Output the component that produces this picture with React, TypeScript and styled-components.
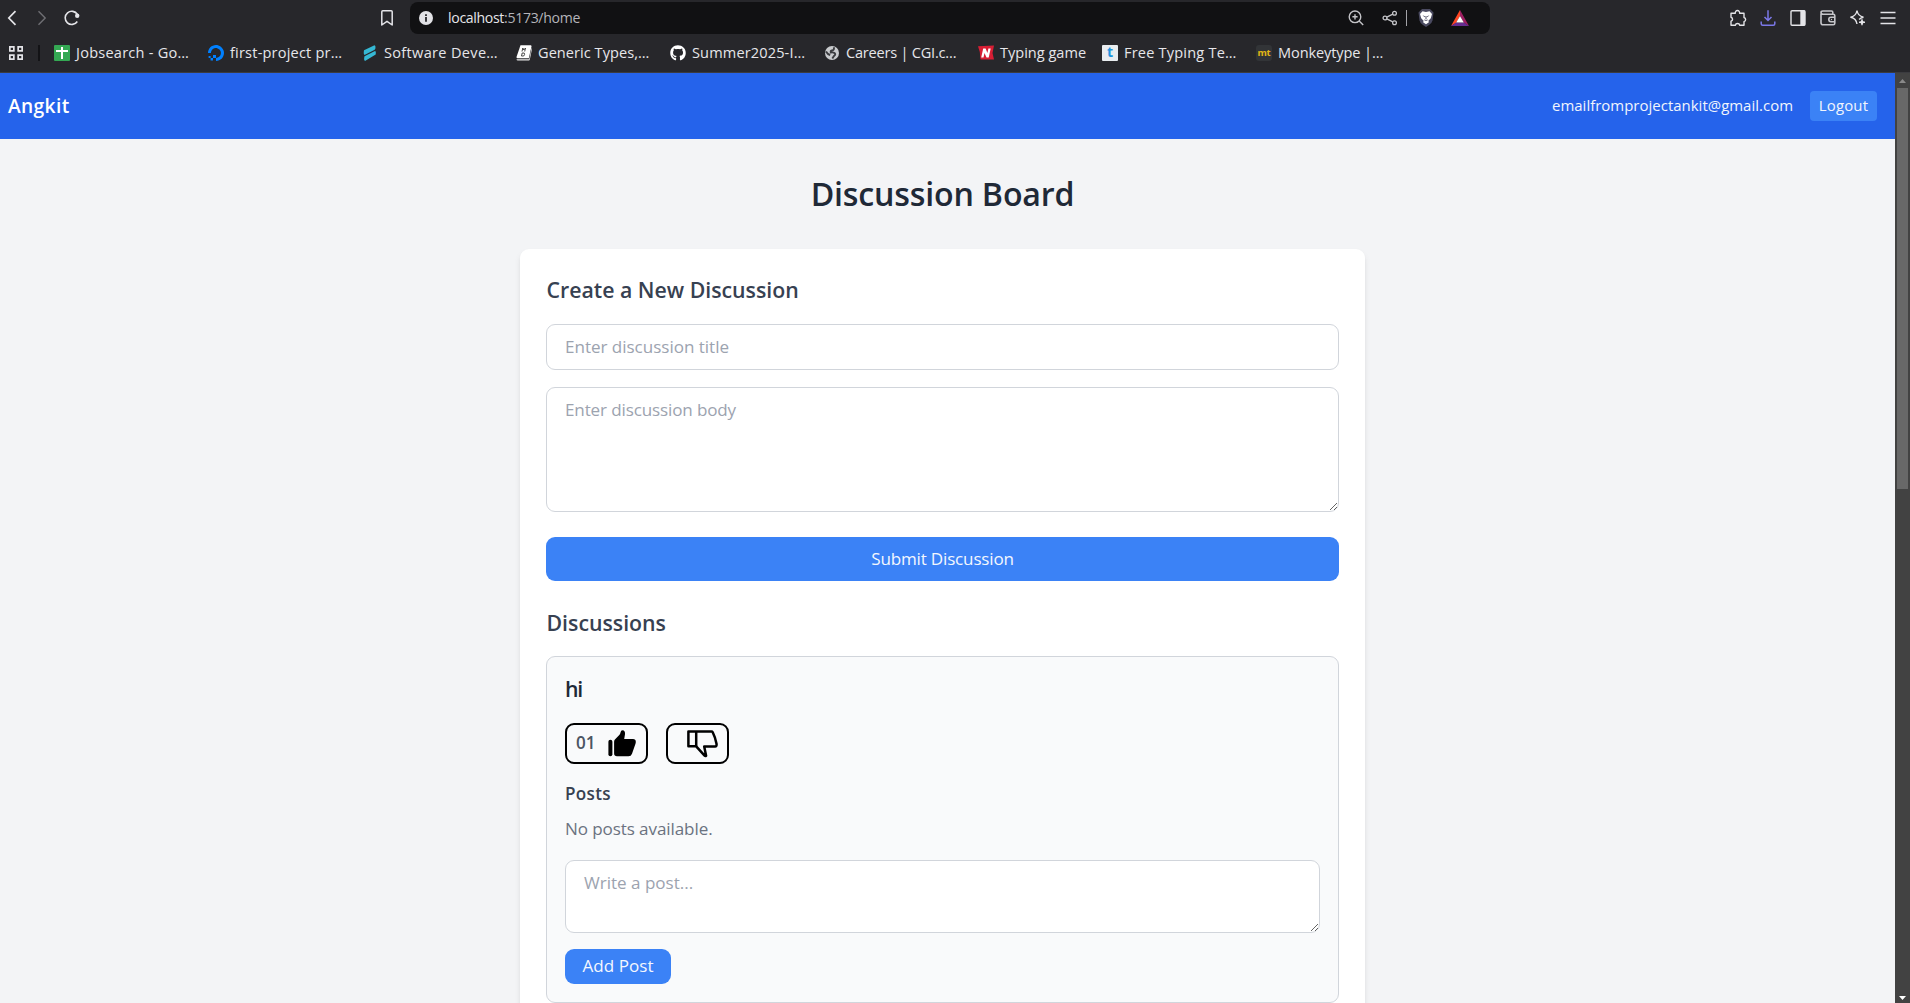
import React from 'react';
import styled, { createGlobalStyle } from 'styled-components';
import { FaGithub } from 'react-icons/fa';

const GlobalStyle = createGlobalStyle`
  *, *::before, *::after { box-sizing: border-box; }
  html, body { margin: 0; padding: 0; overflow: hidden; }
  body, button, input, textarea { font-family: "Open Sans", "Noto Sans", sans-serif; }
  h1, h2, h3, h4, p { margin: 0; }
  svg { display: block; flex: none; }
`;

const Window = styled.div`
  display: flex;
  flex-direction: column;
  width: 100%;
  height: 1003px;
  background: #f3f4f6;
  overflow: hidden;
`;

/* ---------- browser chrome ---------- */

const Toolbar = styled.div`
  display: flex;
  align-items: center;
  flex: none;
  height: 36px;
  background: #27272b;
`;

const IconSlot = styled.div<{ $width?: number; $color?: string }>`
  display: flex;
  align-items: center;
  justify-content: center;
  flex: none;
  width: ${p => p.$width ?? 30}px;
  height: 36px;
  color: ${p => p.$color ?? '#e4e4e8'};
`;

const NavGroup = styled.div`
  display: flex;
  margin-left: -3px;
  width: 375px;
  flex: none;
`;

const AddressBar = styled.div`
  display: flex;
  align-items: center;
  width: 1080px;
  height: 32px;
  margin-left: 8px;
  padding: 0 13px 0 1px;
  border-radius: 8px;
  background: #111113;
`;

const Url = styled.div`
  flex: 1;
  margin-left: 7px;
  font-size: 14.1px;
  line-height: 32px;
  letter-spacing: -0.33px;
  color: #b4b4ba;
  b { font-weight: 400; color: #e6e6ea; }
`;

const UrlDivider = styled.div`
  width: 1px;
  height: 16px;
  background: #a3a3a8;
  margin: 0 2px 0 0;
`;

const ActionGroup = styled.div`
  display: flex;
  margin-left: auto;
  margin-right: 7px;
`;

const BookmarkBar = styled.div`
  display: flex;
  align-items: center;
  flex: none;
  height: 37px;
  padding-bottom: 3px;
  background: #27272b;
  border-bottom: 1px solid #3b3b3f;
`;

const AppsSlot = styled.div`
  display: flex;
  width: 38px;
  padding-left: 8px;
`;

const BarDivider = styled.div`
  width: 2px;
  height: 16px;
  background: #131316;
  margin-right: 14px;
`;

const Bookmark = styled.div<{ $width: number }>`
  display: flex;
  align-items: center;
  gap: 6px;
  flex: none;
  width: ${p => p.$width}px;
`;

const BookmarkLabel = styled.span<{ $track: number }>`
  padding-bottom: 2px;
  font-size: 14.55px;
  line-height: 20px;
  letter-spacing: ${p => p.$track}px;
  white-space: nowrap;
  color: #e6e6ea;
`;

/* ---------- page ---------- */

const Viewport = styled.div`
  display: flex;
  flex: 1;
  min-height: 0;
`;

const Page = styled.div`
  flex: 1;
  min-width: 0;
  height: 930px;
  overflow: hidden;
`;

const ScrollTrack = styled.div`
  display: flex;
  flex-direction: column;
  align-items: center;
  justify-content: space-between;
  width: 15px;
  padding: 6px 0 3px;
  background: #424242;
`;

const ScrollThumb = styled.div`
  width: 11px;
  height: 401px;
  margin: 5px 0 auto;
  background: #686868;
`;

const Header = styled.header`
  display: flex;
  align-items: center;
  justify-content: space-between;
  height: 66px;
  padding: 0 18px 0 8px;
  background: #2563eb;
  color: #fff;
`;

const Brand = styled.div`
  font-size: 19.2px;
  font-weight: 600;
  line-height: 28px;
  letter-spacing: 0.36px;
`;

const Account = styled.div`
  display: flex;
  align-items: center;
  gap: 17px;
  font-size: 14.95px;
  line-height: 22px;
  letter-spacing: 0.02px;
  color: #f1f5fd;
`;

const Email = styled.span`
  padding-bottom: 2px;
`;

const LogoutButton = styled.button`
  width: 67px;
  height: 30px;
  padding: 0 0 2px;
  border: 0;
  border-radius: 4px;
  background: #3b82f6;
  color: #f1f5fd;
  font-size: 14.95px;
  letter-spacing: 0.19px;
`;

const Main = styled.main`
  display: flex;
  flex-direction: column;
  align-items: center;
  padding: 35px 10px 0 0;
`;

const Title = styled.h1`
  margin-bottom: 35px;
  font-size: 32.2px;
  font-weight: 600;
  line-height: 40px;
  letter-spacing: -0.2px;
  color: #1f2937;
`;

const Card = styled.section`
  width: 845px;
  padding: 26px 26px 40px;
  border-radius: 9px;
  background: #fff;
  box-shadow: 0 4px 7px -1px rgba(0, 0, 0, 0.1), 0 2px 4px -2px rgba(0, 0, 0, 0.1);
`;

const SectionTitle = styled.h2<{ $below: number }>`
  margin-bottom: ${p => p.$below}px;
  padding-left: 0.5px;
  font-size: 21.3px;
  font-weight: 600;
  line-height: 30px;
  letter-spacing: -0.01px;
  color: #374151;
`;

const Form = styled.div`
  display: flex;
  flex-direction: column;
  margin-bottom: 27px;
`;

const TextInput = styled.input`
  height: 46px;
  padding: 0 18px 2px;
  border: 1px solid #d1d5db;
  border-radius: 9px;
  background: #fff;
  font-size: 17.07px;
  letter-spacing: -0.03px;
  outline: 0;
  &::placeholder { color: #9ca3af; opacity: 1; }
`;

const TextArea = styled.textarea<{ $height: number; $track: number }>`
  display: block;
  width: 100%;
  height: ${p => p.$height}px;
  padding: 9px 18px;
  border: 1px solid #d1d5db;
  border-radius: 9px;
  background: #fff;
  font-size: 17.07px;
  line-height: 26.4px;
  letter-spacing: ${p => p.$track}px;
  outline: 0;
  overflow: hidden;
  resize: both;
  &::placeholder { color: #9ca3af; opacity: 1; }
`;

const Gap = styled.div<{ $size: number }>`
  flex: none;
  height: ${p => p.$size}px;
`;

const PrimaryButton = styled.button<{ $width?: string; $height: number; $track: number }>`
  display: block;
  width: ${p => p.$width ?? '100%'};
  height: ${p => p.$height}px;
  padding: 0 0 1px;
  border: 0;
  border-radius: 9px;
  background: #3b82f6;
  color: #f3f7fe;
  font-size: 17.07px;
  line-height: 26px;
  letter-spacing: ${p => p.$track}px;
`;

const Discussion = styled.article`
  display: flex;
  flex-direction: column;
  padding: 17px 18px 18px;
  border: 1px solid #d1d5db;
  border-radius: 9px;
  background: #f9fafb;
`;

const DiscussionTitle = styled.h3`
  font-size: 21.3px;
  font-weight: 600;
  line-height: 30px;
  letter-spacing: -1.2px;
  color: #1f2937;
`;

const Votes = styled.div`
  display: flex;
  gap: 18px;
  margin: 19px 0 16px;
`;

const VoteButton = styled.button<{ $width: number; $inset: number }>`
  display: flex;
  align-items: center;
  width: ${p => p.$width}px;
  height: 41px;
  padding: 0 0 0 ${p => p.$inset}px;
  border: 2px solid #000;
  border-radius: 9px;
  background: transparent;
  color: #000;
`;

const VoteCount = styled.span`
  width: 32px;
  padding-bottom: 1px;
  font-size: 17.07px;
  font-weight: 600;
  line-height: 26px;
  letter-spacing: -0.1px;
  text-align: left;
  color: #4b5563;
`;

const PostsTitle = styled.h4`
  font-size: 17.07px;
  font-weight: 600;
  line-height: 28px;
  letter-spacing: 0.32px;
  color: #374151;
`;

const EmptyText = styled.p`
  margin: 7px 0 17px;
  font-size: 17.07px;
  line-height: 28px;
  letter-spacing: -0.1px;
  color: #6b7280;
`;

/* ---------- icons ---------- */

const line = { fill: 'none', stroke: 'currentColor', strokeWidth: 1.4 } as const;

const BackIcon = () => (
  <svg width="16" height="16" viewBox="0 0 16 16" {...line} strokeWidth={1.7}><path d="M11.5 1.2 4.8 8l6.700 6.800" /></svg>
);
const ForwardIcon = () => (
  <svg width="16" height="16" viewBox="0 0 16 16" {...line}><path d="M4.500 1.200 11.200 8l-6.700 6.800" /></svg>
);
const ReloadIcon = () => (
  <svg width="18" height="18" viewBox="0 0 18 18" {...line} strokeWidth={1.6}>
    <path d="M14.300 12.500A6.600 6.600 0 1 1 14.400 5.400" />
    <circle cx="14.200" cy="6.800" r="2.200" fill="currentColor" stroke="none" />
  </svg>
);
const BookmarkIcon = () => (
  <svg width="14" height="18" viewBox="0 0 14 18" {...line} strokeWidth={1.5}>
    <path d="M1.800 2.800q0-1 1-1h8.400q1 0 1 1V16L7 12.300 1.800 16z" strokeLinejoin="round" />
  </svg>
);
const InfoIcon = () => (
  <svg width="16" height="16" viewBox="0 0 16 16">
    <circle cx="8" cy="8" r="7" fill="#e2e2e6" />
    <path d="M7 4.200h2v1.700H7zM7 7h2v4.800H7z" fill="#38383c" />
  </svg>
);
const ZoomIcon = () => (
  <svg width="18" height="18" viewBox="0 0 18 18" {...line}>
    <circle cx="8" cy="7.800" r="5.800" /><path d="M12.200 12 16.200 16M8 5.200v5.200M5.400 7.800h5.200" />
  </svg>
);
const ShareIcon = () => (
  <svg width="16" height="16" viewBox="0 0 16 16" {...line} strokeWidth={1.3}>
    <circle cx="3" cy="8" r="1.900" /><circle cx="12.500" cy="3.300" r="1.900" /><circle cx="12.500" cy="12.700" r="1.900" />
    <path d="M4.800 7.200 10.800 4.200M4.800 8.800l6 3" />
  </svg>
);
const BraveIcon = () => (
  <svg width="16" height="20" viewBox="0 0 16 20">
    <path d="M4 1h8l3.500 3.500-1 8Q14 15 11 17l-3 2-3-2Q2 15 1.500 12.500l-1-8z" fill="#4a4a60" />
    <path d="M4.500 3.300 8 4l3.500-.7L14 6l-1.200 4.300-2.400 2.400.5 1.500L8 16.300l-2.900-2.100.5-1.500-2.400-2.400L2 6z" fill="#fff" />
    <path d="M4.500 7.300 7 8.200l-.4 1zM11.500 7.300 9 8.200l.4 1zM7.500 8h1v3.200h-1zM6.200 11.300 8 12.300l1.800-1-.6 1.500H6.800z" fill="#4a4a60" />
  </svg>
);
const RewardsIcon = () => (
  <svg width="18" height="16" viewBox="0 0 18 16">
    <path d="M9 0 0 16l5.200-3.300L9 6z" fill="#ff4724" />
    <path d="M9 0l9 16-5.200-3.300L9 6z" fill="#9e1f63" />
    <path d="M0 16h18l-5.200-3.400H5.200z" fill="#662d91" />
    <path d="M9 6 5.200 12.600h7.600z" fill="#fff" />
  </svg>
);
const ExtensionIcon = () => (
  <svg width="18" height="18" viewBox="0 0 18 18" {...line} strokeLinejoin="round">
    <path d="M2 4.200h4.300a2.200 2.200 0 1 1 4.300 0H15v4.300a2.100 2.100 0 0 1 0 4.100V16.300h-4.200a2.300 2.300 0 0 0-4.500 0H2v-4.200a2 2 0 0 0 0-3.900z" />
  </svg>
);
const DownloadIcon = () => (
  <svg width="16" height="18" viewBox="0 0 16 18" {...line} strokeWidth={1.5}>
    <path d="M8 1.200v10M4.500 8 8 11.500 11.500 8M1.200 12.500v2.200q0 1.500 1.500 1.500h10.600q1.500 0 1.500-1.500v-2.200" />
  </svg>
);
const SidebarIcon = () => (
  <svg width="16" height="18" viewBox="0 0 16 18">
    <rect x="1" y="1.700" width="14" height="14.500" rx="1" {...line} /><path d="M10.300 1.500H15v15h-4.700z" fill="currentColor" />
  </svg>
);
const WalletIcon = () => (
  <svg width="18" height="18" viewBox="0 0 18 18" {...line} strokeWidth={1.6}>
    <path d="M2 4.500v9.200q0 2 2 2h10.300q1.500 0 1.500-1.500V6.700q0-1.500-1.500-1.500H3.800Q2 5 2 3.500 2 2 3.800 2h8.700q1.300 0 1.300 1.300v1.800" />
    <path d="M16 8.300h-4q-2.200 0-2.200 2.200T12 12.700h4" /><circle cx="12.500" cy="10.500" r=".7" fill="currentColor" stroke="none" />
  </svg>
);
const SparkleIcon = () => (
  <svg width="18" height="18" viewBox="0 0 18 18" {...line} strokeLinejoin="round">
    <path d="M8 1.500Q8.800 7 14.500 8.200M8 1.500Q7.200 7 1.800 8.200 7.200 9.400 8 15M14.500 8.200Q11.500 8.900 10.200 10.500" />
    <path d="M13 10.200v6M10 13.200h6" /><path d="m13 11 2.200 2.200L13 15.400l-2.200-2.200z" fill="currentColor" stroke="none" />
  </svg>
);
const MenuIcon = () => (
  <svg width="16" height="16" viewBox="0 0 16 16" {...line} strokeWidth={1.5}><path d="M.5 2.500h15M.5 8h15M.5 13.500h15" /></svg>
);
const AppsIcon = () => (
  <svg width="16" height="16" viewBox="0 0 16 16" fill="none" stroke="#e4e4e8" strokeWidth="1.700">
    <path d="M1.850 1.850h4v4h-4zM10.150 1.850h4v4h-4zM1.850 10.150h4v4h-4zM10.150 10.150h4v4h-4z" />
  </svg>
);

const SheetsFavicon = () => (
  <svg width="16" height="16" viewBox="0 0 16 16"><rect width="16" height="16" rx="1" fill="#34a853" /><path d="M2 5h12v2H9v7H7V7H2zM7 2h2v4H7z" fill="#fff" /></svg>
);
const OceanFavicon = () => (
  <svg width="16" height="16" viewBox="0 0 16 16" fill="#0080ff">
    <path d="M8 16v-3.100c3.300 0 5.800-3.200 4.600-6.700A4.900 4.900 0 0 0 9.700 3.400C6.200 2.200 3 4.700 3 8H0C0 2.800 5-1.300 10.500.4c2.400.8 4.300 2.700 5.100 5.100C17.300 11 13.200 16 8 16z" />
    <path d="M5 9.900h3V13H5zM2.600 13H5v2.400H2.600zM.6 11.100h2V13h-2z" />
  </svg>
);
const SlashFavicon = () => (
  <svg width="16" height="16" viewBox="0 0 16 16" fill="#35b8d4">
    <path d="M2 5.300 12.500.2q1.200 0 1 3l-.8 1.600L2.500 9.900Q1.300 9.300 2 5.300zM2.500 11.300 13 6.100q1.200.3.700 3.500L3 15.900Q1.500 15.300 2.500 11.300z" />
  </svg>
);
const DocFavicon = () => (
  <svg width="16" height="16" viewBox="0 0 16 16">
    <path d="M4.500.3h10.300q.9.200.7 1.200l-2.700 11.700H1.300Q.3 13 .5 12z" fill="#fff" />
    <path d="M15.700 2.500 13.200 14.300H.5q.2 1.200 1.300 1.200h11q.8 0 1-.8L16 4z" fill="#e8e8e8" />
    <path d="M6 6.500 6.800 3l1 2 1.700-2-.8 3.500M5.500 11l.7-3h2q1 1.500-.5 3z" fill="none" stroke="#333" strokeWidth=".9" />
  </svg>
);
const GlobeFavicon = () => (
  <svg width="16" height="16" viewBox="0 0 16 16">
    <circle cx="8" cy="8" r="7" fill="#c9cbce" />
    <path d="M9.800 2.300Q10.500 4.800 8.500 5.200 6.200 5.500 6.800 7.500q2.700-.4 4 .8 1 1.500-.8 2.700L8.300 13.500M2 6.500q1.500 2.800 4.200 3.500" fill="none" stroke="#3b3c40" strokeWidth="1.900" />
  </svg>
);
const TypingFavicon = () => (
  <svg width="16" height="16" viewBox="0 0 16 16">
    <path d="M0 1.300 16 .5 14.500 8 16 14.500H2.500L1.800 7z" fill="#d81e34" />
    <path d="m3.200 12.500 2-9h2.400l1.800 4.500 1-4.500h2.300l-2 9H8.500L6.500 8l-1 4.500z" fill="#fff" />
  </svg>
);
const Tile = styled.span<{ $bg: string; $fg: string; $size: number; $radius: number; $line: number }>`
  flex: none;
  width: 16px;
  height: 16px;
  border-radius: ${p => p.$radius}px;
  background: ${p => p.$bg};
  color: ${p => p.$fg};
  font-size: ${p => p.$size}px;
  font-weight: 700;
  line-height: ${p => p.$line}px;
  text-align: center;
  letter-spacing: -0.3px;
`;

const ThumbUpIcon = () => (
  <svg width="28" height="27" viewBox="0 0 28 27" fill="#000">
    <rect x=".4" y="9.800" width="4" height="16.500" rx="2" />
    <path d="M6.100 11.800q0-1.300.8-2.200L11.500 4.800q.8-.8 1-2.200Q12.900.3 14.500.3c2 0 2.800 2 2.500 3.900L16.200 9h8.800q2.800 0 2.800 2.800 0 1.200-.4 2.300l-3.400 9.700q-.9 2.500-3.500 2.500H9q-2.900 0-2.900-2.800z" />
  </svg>
);
const ThumbDownIcon = () => (
  <svg width="31" height="28" viewBox="0 0 31 28" fill="none" stroke="#000" strokeWidth="2.500" strokeLinejoin="round">
    <path d="M1.400 1.400h23q.9 0 1.300.8 2.700 5.200 3.800 11.600.4 2.600-1.500 2.700H17.200l1.900 9.200q-.8.700-1.500 0L9.200 16.300H1.400z" />
    <path d="M9.200 1.400v15" />
  </svg>
);

const bookmarks: { label: string; width: number; track: number; icon: React.ReactNode }[] = [
  { label: 'Jobsearch - Go…', width: 154, track: 0.24, icon: <SheetsFavicon /> },
  { label: 'first-project pr…', width: 154, track: 0.2, icon: <OceanFavicon /> },
  { label: 'Software Deve…', width: 154, track: 0.32, icon: <SlashFavicon /> },
  { label: 'Generic Types,…', width: 154, track: 0.05, icon: <DocFavicon /> },
  { label: 'Summer2025-I…', width: 154, track: 0.14, icon: <FaGithub size={16} color="#fff" /> },
  { label: 'Careers | CGI.c…', width: 154, track: -0.22, icon: <GlobeFavicon /> },
  { label: 'Typing game', width: 124, track: 0, icon: <TypingFavicon /> },
  { label: 'Free Typing Te…', width: 154, track: 0.2, icon: <Tile $bg="#e9edf0" $fg="#1e95e0" $size={14} $radius={1} $line={14}>t</Tile> },
  { label: 'Monkeytype |…', width: 154, track: -0.1, icon: <Tile $bg="#323437" $fg="#e2b714" $size={9.5} $radius={3} $line={15}>mt</Tile> },
];

export default function App() {
  return (
    <Window>
      <GlobalStyle />
      <Toolbar>
        <NavGroup>
          <IconSlot><BackIcon /></IconSlot>
          <IconSlot $color="#6f6f74"><ForwardIcon /></IconSlot>
          <IconSlot><ReloadIcon /></IconSlot>
        </NavGroup>
        <IconSlot><BookmarkIcon /></IconSlot>
        <AddressBar>
          <IconSlot><InfoIcon /></IconSlot>
          <Url><b>localhost</b>:5173/home</Url>
          <IconSlot $width={34} $color="#c4c4c8"><ZoomIcon /></IconSlot>
          <IconSlot $width={33} $color="#c4c4c8"><ShareIcon /></IconSlot>
          <UrlDivider />
          <IconSlot $width={34}><BraveIcon /></IconSlot>
          <IconSlot $width={34}><RewardsIcon /></IconSlot>
        </AddressBar>
        <ActionGroup>
          <IconSlot><ExtensionIcon /></IconSlot>
          <IconSlot $color="#7b78e8"><DownloadIcon /></IconSlot>
          <IconSlot><SidebarIcon /></IconSlot>
          <IconSlot $color="#c6c6ca"><WalletIcon /></IconSlot>
          <IconSlot><SparkleIcon /></IconSlot>
          <IconSlot><MenuIcon /></IconSlot>
        </ActionGroup>
      </Toolbar>
      <BookmarkBar>
        <AppsSlot><AppsIcon /></AppsSlot>
        <BarDivider />
        {bookmarks.map(b => (
          <Bookmark key={b.label} $width={b.width}>
            {b.icon}
            <BookmarkLabel $track={b.track}>{b.label}</BookmarkLabel>
          </Bookmark>
        ))}
      </BookmarkBar>
      <Viewport>
        <Page>
          <Header>
            <Brand>Angkit</Brand>
            <Account>
              <Email>emailfromprojectankit@gmail.com</Email>
              <LogoutButton>Logout</LogoutButton>
            </Account>
          </Header>
          <Main>
            <Title>Discussion Board</Title>
            <Card>
              <SectionTitle $below={19}>Create a New Discussion</SectionTitle>
              <Form>
                <TextInput placeholder="Enter discussion title" />
                <Gap $size={17} />
                <TextArea $height={125} $track={-0.14} placeholder="Enter discussion body" />
                <Gap $size={25} />
                <PrimaryButton $height={44} $track={-0.18}>Submit Discussion</PrimaryButton>
              </Form>
              <SectionTitle $below={18}>Discussions</SectionTitle>
              <Discussion>
                <DiscussionTitle>hi</DiscussionTitle>
                <Votes>
                  <VoteButton $width={83} $inset={9}>
                    <VoteCount>01</VoteCount>
                    <ThumbUpIcon />
                  </VoteButton>
                  <VoteButton $width={63} $inset={19}>
                    <ThumbDownIcon />
                  </VoteButton>
                </Votes>
                <PostsTitle>Posts</PostsTitle>
                <EmptyText>No posts available.</EmptyText>
                <TextArea $height={73} $track={-0.02} placeholder="Write a post..." />
                <Gap $size={16} />
                <PrimaryButton $width="106px" $height={35} $track={0.02}>Add Post</PrimaryButton>
              </Discussion>
            </Card>
          </Main>
        </Page>
        <ScrollTrack>
          <svg width="7" height="4" viewBox="0 0 7 4"><path d="M0 4 3.500 0 7 4z" fill="#8a8a8a" /></svg>
          <ScrollThumb />
          <svg width="7" height="4" viewBox="0 0 7 4"><path d="M0 0h7L3.500 4z" fill="#fff" /></svg>
        </ScrollTrack>
      </Viewport>
    </Window>
  );
}
